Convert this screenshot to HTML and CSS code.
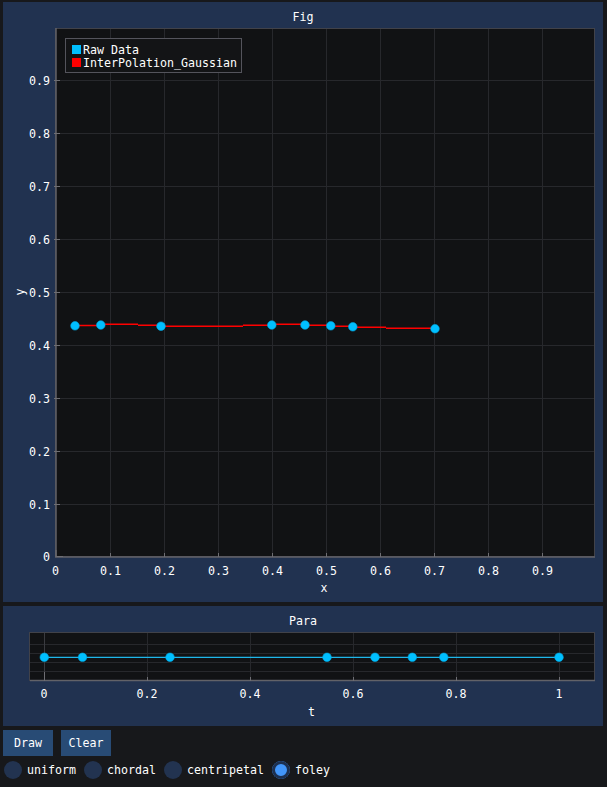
FILE: index.html
```html
<!DOCTYPE html>
<html>
<head>
<meta charset="utf-8">
<link rel="stylesheet" href="styles.css">
</head>
<body>
<div class="app">
  <section class="panel fig">
    <svg class="plot" width="600" height="600" viewBox="3 2 600 600">
      <text class="title" x="303" y="17">Fig</text>
      <rect class="plot-bg" x="55" y="28" width="540" height="529"/>
      <g class="grid">
        <line x1="110.5" y1="28" x2="110.5" y2="557"/>
        <line x1="164.5" y1="28" x2="164.5" y2="557"/>
        <line x1="218.5" y1="28" x2="218.5" y2="557"/>
        <line x1="272.5" y1="28" x2="272.5" y2="557"/>
        <line x1="326.5" y1="28" x2="326.5" y2="557"/>
        <line x1="380.5" y1="28" x2="380.5" y2="557"/>
        <line x1="434.5" y1="28" x2="434.5" y2="557"/>
        <line x1="488.5" y1="28" x2="488.5" y2="557"/>
        <line x1="542.5" y1="28" x2="542.5" y2="557"/>
        <line x1="55" y1="80.5" x2="595" y2="80.5"/>
        <line x1="55" y1="133.5" x2="595" y2="133.5"/>
        <line x1="55" y1="186.5" x2="595" y2="186.5"/>
        <line x1="55" y1="239.5" x2="595" y2="239.5"/>
        <line x1="55" y1="292.5" x2="595" y2="292.5"/>
        <line x1="55" y1="345.5" x2="595" y2="345.5"/>
        <line x1="55" y1="398.5" x2="595" y2="398.5"/>
        <line x1="55" y1="451.5" x2="595" y2="451.5"/>
        <line x1="55" y1="504.5" x2="595" y2="504.5"/>
      </g>
      <rect class="frame" x="55.5" y="28.5" width="539" height="528"/>
      <line class="axis" x1="56" y1="28" x2="56" y2="557"/>
      <line class="axis" x1="55" y1="557" x2="595" y2="557"/>
      <g class="ticks">
        <line x1="56" y1="557" x2="56" y2="550"/>
        <line x1="110.5" y1="557" x2="110.5" y2="553"/>
        <line x1="164.5" y1="557" x2="164.5" y2="553"/>
        <line x1="218.5" y1="557" x2="218.5" y2="553"/>
        <line x1="272.5" y1="557" x2="272.5" y2="553"/>
        <line x1="326.5" y1="557" x2="326.5" y2="553"/>
        <line x1="380.5" y1="557" x2="380.5" y2="553"/>
        <line x1="434.5" y1="557" x2="434.5" y2="553"/>
        <line x1="488.5" y1="557" x2="488.5" y2="553"/>
        <line x1="542.5" y1="557" x2="542.5" y2="553"/>
        <line x1="56" y1="556.5" x2="63" y2="556.5"/>
        <line x1="54" y1="80.5" x2="60" y2="80.5"/>
        <line x1="54" y1="133.5" x2="60" y2="133.5"/>
        <line x1="54" y1="186.5" x2="60" y2="186.5"/>
        <line x1="54" y1="239.5" x2="60" y2="239.5"/>
        <line x1="54" y1="292.5" x2="60" y2="292.5"/>
        <line x1="54" y1="345.5" x2="60" y2="345.5"/>
        <line x1="54" y1="398.5" x2="60" y2="398.5"/>
        <line x1="54" y1="451.5" x2="60" y2="451.5"/>
        <line x1="54" y1="504.5" x2="60" y2="504.5"/>
      </g>
      <g class="ylabels">
        <text x="50" y="81">0.9</text>
        <text x="50" y="134">0.8</text>
        <text x="50" y="187">0.7</text>
        <text x="50" y="240">0.6</text>
        <text x="50" y="293">0.5</text>
        <text x="50" y="346">0.4</text>
        <text x="50" y="399">0.3</text>
        <text x="50" y="452">0.2</text>
        <text x="50" y="505">0.1</text>
        <text x="50" y="557">0</text>
      </g>
      <g class="xlabels">
        <text x="55.5" y="571">0</text>
        <text x="110.5" y="571">0.1</text>
        <text x="164.5" y="571">0.2</text>
        <text x="218.5" y="571">0.3</text>
        <text x="272.5" y="571">0.4</text>
        <text x="326.5" y="571">0.5</text>
        <text x="380.5" y="571">0.6</text>
        <text x="434.5" y="571">0.7</text>
        <text x="488.5" y="571">0.8</text>
        <text x="542.5" y="571">0.9</text>
      </g>
      <text class="axis-label" x="324" y="588">x</text>
      <text class="axis-label" x="20" y="292" transform="rotate(-90 20 292)">y</text>
      <path class="interp" d="M75 325.5 H101 M101 324.2 H138 M138 325.3 H161 M161 326.3 H243 M243 325.3 H272 M272 324.3 H305 M305 325.3 H331 M331 326.3 H353 M353 327.3 H386 M386 328.3 H435"/>
      <g class="pts">
        <circle cx="75" cy="325.8" r="4.3"/>
        <circle cx="100.8" cy="325" r="4.3"/>
        <circle cx="161" cy="326.2" r="4.3"/>
        <circle cx="271.8" cy="325" r="4.3"/>
        <circle cx="305" cy="325" r="4.3"/>
        <circle cx="330.8" cy="325.8" r="4.3"/>
        <circle cx="352.8" cy="326.8" r="4.3"/>
        <circle cx="435" cy="328.7" r="4.3"/>
      </g>
      <rect class="legend" x="65.5" y="38.5" width="176" height="34"/>
      <rect x="72" y="45" width="9" height="9" fill="#00bfff"/>
      <rect x="72" y="58" width="9" height="9" fill="#ff0000"/>
      <text class="legend-text" x="83" y="50">Raw Data</text>
      <text class="legend-text" x="83" y="63">InterPolation_Gaussian</text>
    </svg>
  </section>
  <section class="panel para">
    <svg class="plot" width="600" height="120" viewBox="3 606 600 120">
      <text class="title" x="303" y="621">Para</text>
      <rect class="plot-bg" x="30" y="632" width="565" height="49"/>
      <g class="grid">
        <line x1="30" y1="644.5" x2="595" y2="644.5"/>
        <line x1="30" y1="653.5" x2="595" y2="653.5"/>
        <line x1="30" y1="662.5" x2="595" y2="662.5"/>
        <line x1="30" y1="671.5" x2="595" y2="671.5"/>
        <line x1="147.5" y1="632" x2="147.5" y2="680"/>
        <line x1="250.5" y1="632" x2="250.5" y2="680"/>
        <line x1="353.5" y1="632" x2="353.5" y2="680"/>
        <line x1="456.5" y1="632" x2="456.5" y2="680"/>
        <line x1="559.5" y1="632" x2="559.5" y2="680"/>
      </g>
      <line class="zero" x1="44.5" y1="632" x2="44.5" y2="680"/>
      <rect class="frame" x="29.5" y="632.5" width="565" height="48"/>
      <line class="axis" x1="30" y1="680.5" x2="595" y2="680.5"/>
      <g class="ticks">
        <line x1="44.5" y1="681" x2="44.5" y2="672"/>
        <line x1="147.5" y1="681" x2="147.5" y2="677"/>
        <line x1="250.5" y1="681" x2="250.5" y2="677"/>
        <line x1="353.5" y1="681" x2="353.5" y2="677"/>
        <line x1="456.5" y1="681" x2="456.5" y2="677"/>
        <line x1="559.5" y1="681" x2="559.5" y2="677"/>
      </g>
      <line class="tline" x1="44" y1="657.3" x2="559" y2="657.3"/>
      <g class="pts">
        <circle cx="44.3" cy="657.3" r="4.3"/>
        <circle cx="82.5" cy="657.3" r="4.3"/>
        <circle cx="170" cy="657.3" r="4.3"/>
        <circle cx="327" cy="657.3" r="4.3"/>
        <circle cx="375" cy="657.3" r="4.3"/>
        <circle cx="412.3" cy="657.3" r="4.3"/>
        <circle cx="443.8" cy="657.3" r="4.3"/>
        <circle cx="559" cy="657.3" r="4.3"/>
      </g>
      <g class="xlabels">
        <text x="44" y="694">0</text>
        <text x="147" y="694">0.2</text>
        <text x="250" y="694">0.4</text>
        <text x="353" y="694">0.6</text>
        <text x="456" y="694">0.8</text>
        <text x="559" y="694">1</text>
      </g>
      <text class="axis-label" x="311.5" y="712">t</text>
    </svg>
  </section>
  <div class="buttons">
    <button class="btn">Draw</button>
    <button class="btn">Clear</button>
  </div>
  <div class="radios">
    <label class="radio"><span class="dot"></span>uniform</label>
    <label class="radio"><span class="dot"></span>chordal</label>
    <label class="radio"><span class="dot"></span>centripetal</label>
    <label class="radio"><span class="dot on"></span>foley</label>
  </div>
</div>
</body>
</html>
```
FILE: styles.css
```css
* { box-sizing: border-box; }
html, body {
  margin: 0;
  background: #17181b;
}
body {
  font-family: "DejaVu Sans Mono", "Liberation Mono", monospace;
  font-size: 11.63px;
  color: #ffffff;
}
.app {
  display: flex;
  flex-direction: column;
  gap: 4px;
  padding: 2px 0 0 3px;
  width: 607px;
}
.panel {
  width: 600px;
  background: #213250;
}
.fig { height: 600px; }
.para { height: 120px; }
.plot {
  display: block;
  font-family: "DejaVu Sans Mono", "Liberation Mono", monospace;
  font-size: 11.63px;
}
.plot text {
  fill: #ffffff;
  dominant-baseline: central;
}
.title, .axis-label, .xlabels text { text-anchor: middle; }
.ylabels text { text-anchor: end; }
.legend-text { text-anchor: start; }
.plot-bg { fill: #111214; }
.grid line { stroke: #27282c; stroke-width: 1; }
.zero { stroke: #3a3b40; stroke-width: 1; }
.frame { fill: none; stroke: #414249; stroke-width: 1; }
.axis { stroke: #626268; stroke-width: 1.5; }
.ticks line { stroke: #6e6e73; stroke-width: 1; }
.legend { fill: #131416; stroke: #54545c; stroke-width: 1; }
.interp { fill: none; stroke: #ff0000; stroke-width: 1.6; }
.pts circle { fill: #00bfff; stroke: #00a8e0; stroke-width: 0.6; }
.tline { stroke: #1fb6ea; stroke-width: 1.3; }
.buttons {
  display: flex;
  gap: 8px;
}
.btn {
  width: 50px;
  height: 26px;
  border: 0;
  padding: 0;
  background: #284b75;
  color: #ffffff;
  font-family: inherit;
  font-size: inherit;
}
.radios {
  display: flex;
  gap: 8px;
  margin-top: 1px;
  padding-left: 1px;
  height: 18px;
}
.radio {
  display: flex;
  align-items: center;
  line-height: 18px;
}
.dot {
  width: 18px;
  height: 18px;
  border-radius: 50%;
  background: #223350;
  margin-right: 5px;
  flex: none;
}
.dot.on {
  background: #4296fa;
  box-shadow: inset 0 0 0 3px #1d3050;
}
```
